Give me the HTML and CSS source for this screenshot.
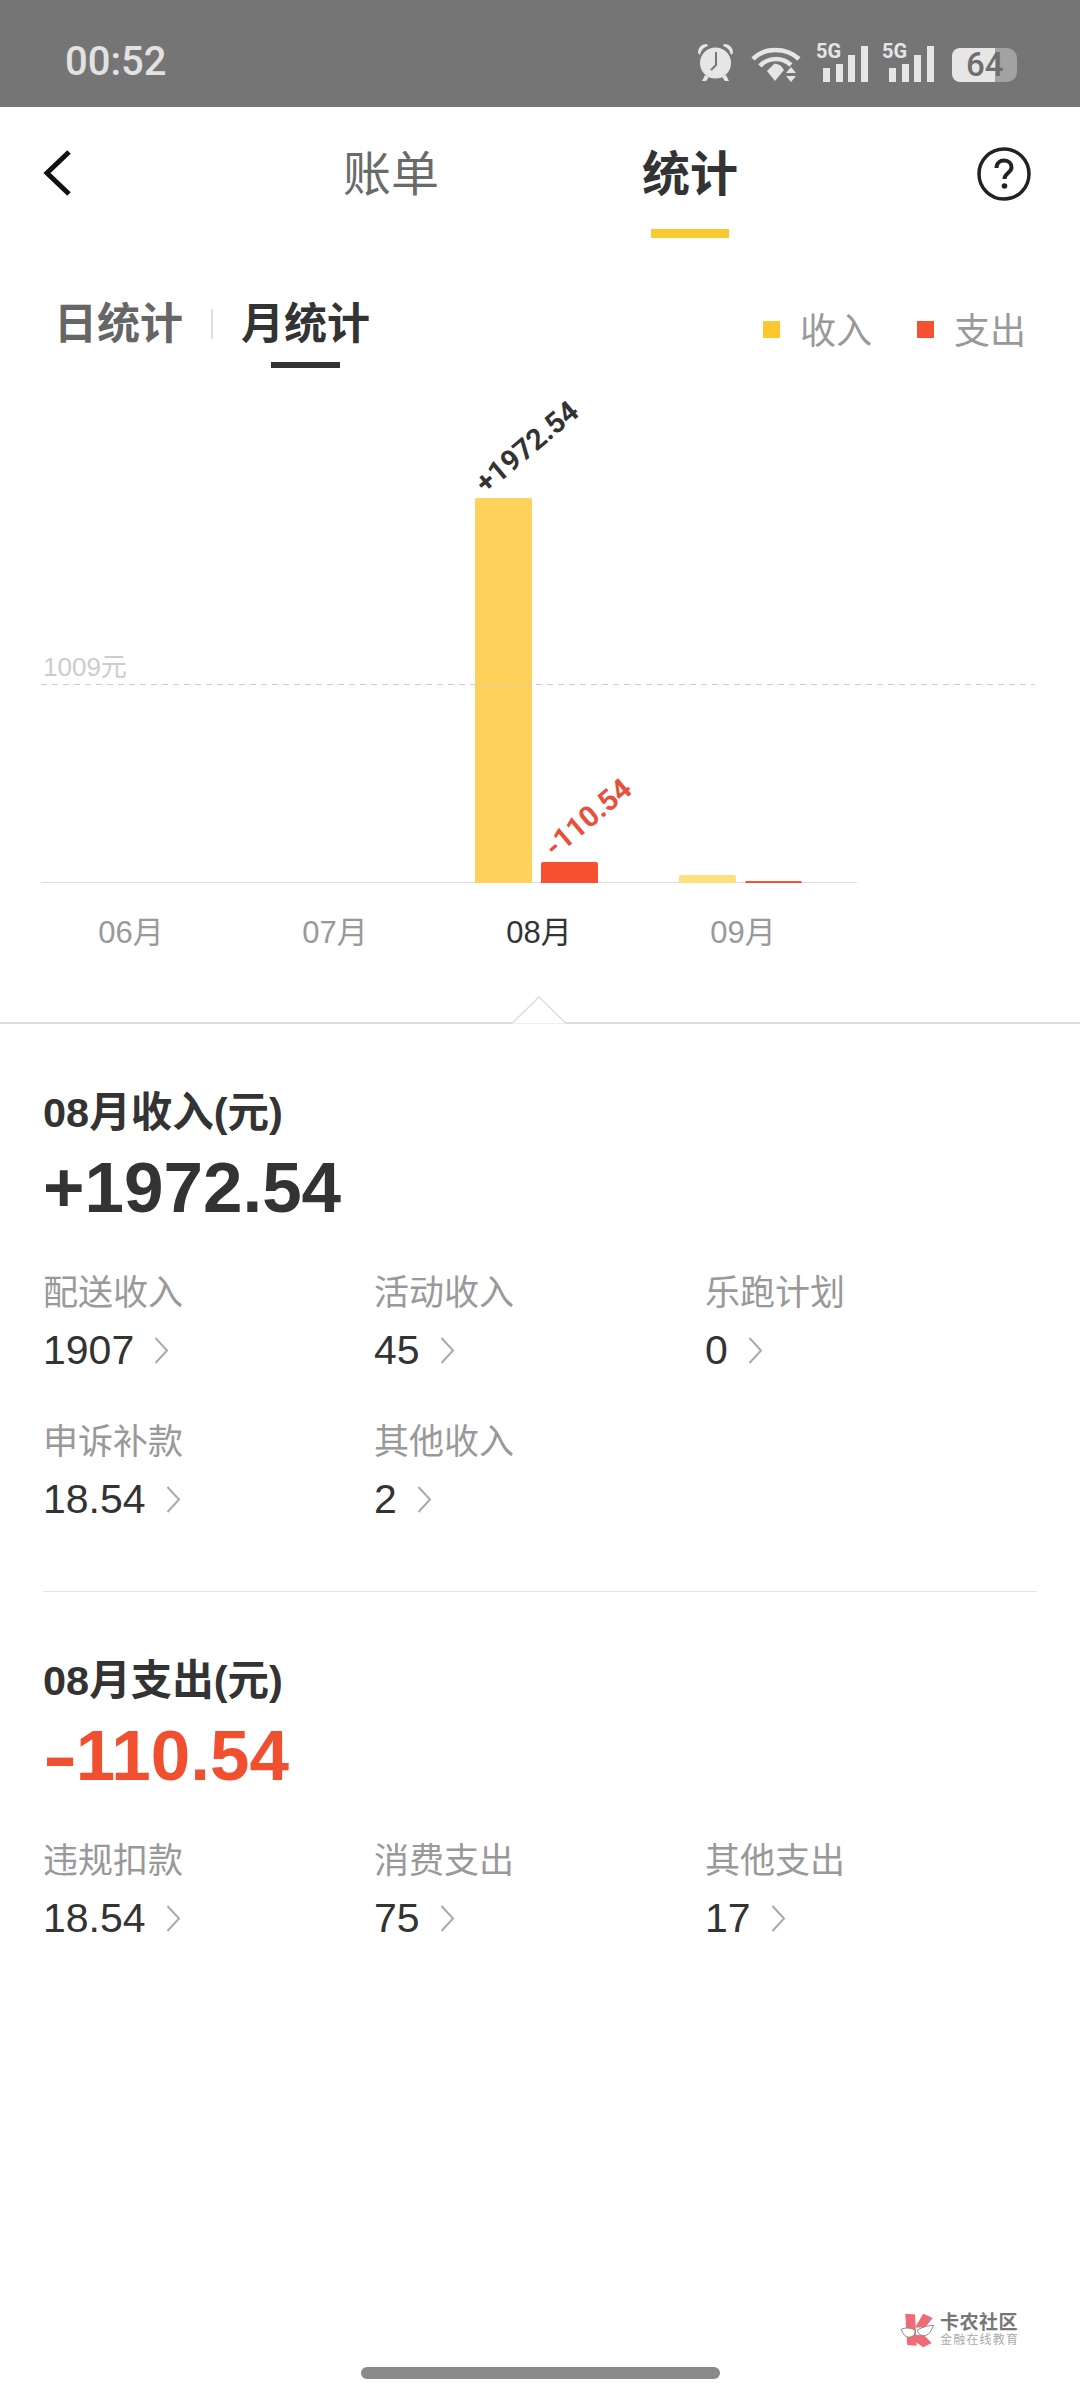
FILE: index.html
```html
<!DOCTYPE html>
<html lang="zh-CN">
<head>
  <meta charset="UTF-8">
  <meta name="viewport" content="width=device-width, initial-scale=1.0">
  <title>统计</title>
  <link rel="stylesheet" href="styles.css">
</head>
<body>
  <div id="page">
    <div class="status-bar">
      <span class="time">00:52</span>
      <div class="status-icons">
        <svg class="icon-alarm" width="37" height="39" viewBox="0 0 37 39">
          <path d="M1 10 C1 4 5 1 10 1 L11 3 C7 4 4 7 3 12 Z M36 10 C36 4 32 1 27 1 L26 3 C30 4 33 7 34 12 Z" fill="#e6e6e6"/>
          <path d="M8 32 L5 38 L9 38 L12 34 Z M29 32 L32 38 L28 38 L25 34 Z" fill="#e6e6e6"/>
          <circle cx="18.5" cy="20" r="15.5" fill="#e6e6e6"/>
          <path d="M19 9 L19 22 L14 27" fill="none" stroke="#757575" stroke-width="2"/>
        </svg>
        <svg class="icon-wifi" width="51" height="36" viewBox="0 0 51 36">
          <path d="M2 13 C13 1 35 1 48 13" fill="none" stroke="#e6e6e6" stroke-width="4.5"/>
          <path d="M9 20 C17 11 31 11 40 19" fill="none" stroke="#e6e6e6" stroke-width="4.5"/>
          <path d="M16 25 L23 18 C26 17 30 19 33 24 L24 35 Z" fill="#e6e6e6"/>
          <path d="M35 27 L45 27 L40 21 Z M35 30 L45 30 L40 36 Z" fill="#e6e6e6"/>
        </svg>
        <div class="signal">
          <span class="signal-label">5G</span>
          <i class="b1"></i><i class="b2"></i><i class="b3"></i><i class="b4"></i>
        </div>
        <div class="signal">
          <span class="signal-label">5G</span>
          <i class="b1"></i><i class="b2"></i><i class="b3"></i><i class="b4"></i>
        </div>
        <div class="battery"><span class="battery-num">64</span></div>
      </div>
    </div>

    <div class="nav">
      <svg class="back" width="29" height="46" viewBox="0 0 29 46">
        <path d="M26 2 L4 23 L26 44" fill="none" stroke="#111" stroke-width="5"/>
      </svg>
      <div class="tabs">
        <span class="tab">账单</span>
        <span class="tab active">统计</span>
      </div>
      <svg class="help" width="54" height="54" viewBox="0 0 54 54">
        <circle cx="27" cy="27" r="25" fill="none" stroke="#222" stroke-width="3.5"/>
        <path d="M19.5 21 C19.5 16 23 13.5 27 13.5 C31.5 13.5 34.5 16.5 34.5 20.5 C34.5 25.5 27.5 26 27.5 32" fill="none" stroke="#222" stroke-width="4"/>
        <circle cx="27.5" cy="39" r="2.8" fill="#222"/>
      </svg>
    </div>

    <div class="filter">
      <div class="range">
        <span class="range-item">日统计</span>
        <span class="range-sep"></span>
        <span class="range-item active">月统计</span>
      </div>
      <div class="legend">
        <i class="dot dot-in"></i><span class="legend-text">收入</span>
        <i class="dot dot-out"></i><span class="legend-text">支出</span>
      </div>
    </div>

    <div class="chart">
      <div class="avg-label">1009元</div>
      <div class="avg-line"></div>
      <div class="plot">
        <div class="col"></div>
        <div class="col"></div>
        <div class="col">
          <div class="bar bar-in" style="height: 385px">
            <span class="bar-num">+1972.54</span>
          </div>
          <div class="bar bar-out" style="height: 21px">
            <span class="bar-num bar-num-out">-110.54</span>
          </div>
        </div>
        <div class="col">
          <div class="bar bar-in-light" style="height: 8px"></div>
          <div class="bar bar-out" style="height: 2px"></div>
        </div>
      </div>
      <div class="months">
        <span class="month">06月</span>
        <span class="month">07月</span>
        <span class="month active">08月</span>
        <span class="month">09月</span>
      </div>
    </div>

    <div class="pointer-line">
      <svg class="pointer" width="54" height="28" viewBox="0 0 54 28">
        <path d="M0 27.5 L27 1 L54 27.5" fill="#fff" stroke="#ddd" stroke-width="1.5"/>
      </svg>
    </div>

    <div class="stat stat-income">
      <div class="stat-title">08月收入(元)</div>
      <div class="stat-value">+1972.54</div>
      <div class="items">
        <div class="item">
          <div class="item-label">配送收入</div>
          <div class="item-value">1907 <svg class="arrow" width="15" height="27" viewBox="0 0 15 27"><path d="M1.5 1 L13 13.5 L1.5 26" fill="none" stroke="#aaa" stroke-width="2"/></svg></div>
        </div>
        <div class="item">
          <div class="item-label">活动收入</div>
          <div class="item-value">45 <svg class="arrow" width="15" height="27" viewBox="0 0 15 27"><path d="M1.5 1 L13 13.5 L1.5 26" fill="none" stroke="#aaa" stroke-width="2"/></svg></div>
        </div>
        <div class="item">
          <div class="item-label">乐跑计划</div>
          <div class="item-value">0 <svg class="arrow" width="15" height="27" viewBox="0 0 15 27"><path d="M1.5 1 L13 13.5 L1.5 26" fill="none" stroke="#aaa" stroke-width="2"/></svg></div>
        </div>
        <div class="item">
          <div class="item-label">申诉补款</div>
          <div class="item-value">18.54 <svg class="arrow" width="15" height="27" viewBox="0 0 15 27"><path d="M1.5 1 L13 13.5 L1.5 26" fill="none" stroke="#aaa" stroke-width="2"/></svg></div>
        </div>
        <div class="item">
          <div class="item-label">其他收入</div>
          <div class="item-value">2 <svg class="arrow" width="15" height="27" viewBox="0 0 15 27"><path d="M1.5 1 L13 13.5 L1.5 26" fill="none" stroke="#aaa" stroke-width="2"/></svg></div>
        </div>
      </div>
    </div>

    <div class="stat stat-expense">
      <div class="stat-title">08月支出(元)</div>
      <div class="stat-value expense"><span class="minus">-</span>110.54</div>
      <div class="items">
        <div class="item">
          <div class="item-label">违规扣款</div>
          <div class="item-value">18.54 <svg class="arrow" width="15" height="27" viewBox="0 0 15 27"><path d="M1.5 1 L13 13.5 L1.5 26" fill="none" stroke="#aaa" stroke-width="2"/></svg></div>
        </div>
        <div class="item">
          <div class="item-label">消费支出</div>
          <div class="item-value">75 <svg class="arrow" width="15" height="27" viewBox="0 0 15 27"><path d="M1.5 1 L13 13.5 L1.5 26" fill="none" stroke="#aaa" stroke-width="2"/></svg></div>
        </div>
        <div class="item">
          <div class="item-label">其他支出</div>
          <div class="item-value">17 <svg class="arrow" width="15" height="27" viewBox="0 0 15 27"><path d="M1.5 1 L13 13.5 L1.5 26" fill="none" stroke="#aaa" stroke-width="2"/></svg></div>
        </div>
      </div>
    </div>

    <div class="watermark">
      <svg width="35" height="36" viewBox="120 95 105 110">
        <path d="M135 100 L165 103 L170 198 L141 196 Z" fill="#ee6b78"/>
        <path d="M190 100 L219 113 L196 142 L165 142 Z" fill="#ee6b78"/>
        <path d="M168 165 L192 165 L216 190 L190 203 L166 186 Z" fill="#ee6b78"/>
        <path d="M122 148 C135 142 150 143 165 150 C168 168 150 176 138 170 C130 166 128 158 122 148 Z" fill="#fff" stroke="#888" stroke-width="3"/>
        <path d="M222 136 C205 136 190 140 172 150 C175 168 195 172 206 162 C214 155 216 146 222 136 Z" fill="#fff" stroke="#888" stroke-width="3"/>
      </svg>
      <div class="watermark-text">
        <div class="watermark-name">卡农社区</div>
        <div class="watermark-sub">金融在线教育</div>
      </div>
    </div>

    <div class="home-bar"></div>
  </div>
</body>
</html>
```

FILE: styles.css
```css
* {
  box-sizing: border-box;
}

body {
  margin: 0;
  background-color: #ffffff;
  font-family: "Liberation Sans", "Noto Sans CJK SC", sans-serif;
  color: #333333;
}

#page {
  position: relative;
  width: 1080px;
  height: 2400px;
  overflow: hidden;
  background-color: #ffffff;
}

/* status bar */
.status-bar {
  display: flex;
  align-items: center;
  justify-content: space-between;
  height: 107px;
  padding: 16px 63px 0 65px;
  background-color: #757575;
}

.time {
  font-family: Roboto, sans-serif;
  font-size: 40px;
  font-weight: 500;
  color: #e2e2e2;
}

.status-icons {
  display: flex;
  align-items: flex-end;
  height: 40px;
}

.icon-alarm {
  margin-right: 17px;
}

.icon-wifi {
  margin-right: 14px;
}

.signal {
  position: relative;
  display: flex;
  align-items: flex-end;
  justify-content: flex-end;
  gap: 5.6px;
  width: 52px;
  height: 37px;
  margin-right: 14px;
}

.signal i {
  display: block;
  width: 7px;
  background-color: #e6e6e6;
}

.signal .b1 { height: 14px; }
.signal .b2 { height: 18px; }
.signal .b3 { height: 27px; }
.signal .b4 { height: 36px; }

.signal-label {
  position: absolute;
  top: -4px;
  left: 0;
  font-family: Roboto, sans-serif;
  font-size: 20px;
  font-weight: 700;
  line-height: 20px;
  color: #e6e6e6;
}

.battery {
  display: flex;
  align-items: center;
  width: 65px;
  height: 34px;
  margin-left: 4px;
  padding-left: 14px;
  border-radius: 8px 10px 10px 8px;
  background: linear-gradient(90deg, #e6e6e6 66%, #a2a2a2 66%);
}

.battery-num {
  font-family: Roboto, sans-serif;
  font-size: 33px;
  font-weight: 500;
  color: #6e6e6e;
}

/* title row */
.nav {
  position: relative;
  display: flex;
  align-items: center;
  justify-content: space-between;
  height: 133px;
  padding: 0 49px 0 43px;
}

.back {
  margin-top: -2px;
}

.tabs {
  display: flex;
  gap: 203px;
  margin-left: 32px;
  padding-top: 2px;
}

.tab {
  position: relative;
  font-size: 48px;
  line-height: 60px;
  color: #6a6a6a;
}

.tab.active {
  font-weight: 700;
  color: #333333;
}

.tab.active::after {
  content: "";
  position: absolute;
  left: 9px;
  bottom: -33px;
  width: 78px;
  height: 9px;
  background-color: #fbc92f;
}

/* day / month filter */
.filter {
  display: flex;
  align-items: flex-start;
  justify-content: space-between;
  height: 140px;
  padding: 56px 54px 0 54px;
}

.range {
  display: flex;
  align-items: center;
}

.range-item {
  position: relative;
  font-size: 43px;
  font-weight: 700;
  line-height: 56px;
  color: #666666;
}

.range-item.active {
  color: #333333;
}

.range-item.active::after {
  content: "";
  position: absolute;
  left: 30px;
  bottom: -16px;
  width: 69px;
  height: 6px;
  background-color: #333333;
}

.range-sep {
  width: 2px;
  height: 30px;
  margin: 0 28px;
  background-color: #dddddd;
}

.legend {
  display: flex;
  align-items: center;
  margin-top: 13px;
}

.dot {
  display: block;
  width: 17px;
  height: 17px;
  margin-right: 20px;
  margin-bottom: 6px;
}

.dot-in {
  background-color: #fbc92f;
}

.dot-out {
  background-color: #f5502f;
}

.legend-text {
  font-size: 36px;
  line-height: 46px;
  color: #999999;
}

.legend-text:nth-child(2) {
  margin-right: 45px;
}

/* chart */
.chart {
  position: relative;
  height: 642px;
  padding-left: 41px;
}

.avg-label {
  position: absolute;
  top: 272px;
  left: 43px;
  font-size: 26px;
  line-height: 30px;
  color: #cccccc;
}

.avg-line {
  position: absolute;
  top: 304px;
  left: 41px;
  width: 994px;
  height: 1px;
  background: repeating-linear-gradient(90deg, #cccccc 0 6px, transparent 6px 11px);
  z-index: 2;
}

.plot {
  display: grid;
  grid-template-columns: repeat(4, 204px);
  width: 816px;
  height: 503px;
  border-bottom: 1px solid #dddddd;
}

.col {
  display: flex;
  align-items: flex-end;
  gap: 9px;
  height: 502px;
  padding-left: 26px;
}

.bar {
  position: relative;
  flex: none;
  width: 57px;
  margin-bottom: -1px;
  border-radius: 2px 2px 0 0;
}

.bar-in {
  background-color: #fed25a;
}

.bar-in-light {
  background-color: #fde17f;
}

.bar-out {
  background-color: #f5502f;
}

.bar-num {
  position: absolute;
  left: 14px;
  bottom: 100%;
  font-family: Roboto, sans-serif;
  font-size: 29px;
  font-weight: 700;
  line-height: 30px;
  white-space: nowrap;
  color: #333333;
  transform: rotate(-40deg);
  transform-origin: left bottom;
}

.bar-num-out {
  left: 17px;
  color: #e8503a;
}

.months {
  display: grid;
  grid-template-columns: repeat(4, 204px);
  padding-top: 30px;
}

.month {
  padding-right: 24px;
  font-size: 31px;
  line-height: 40px;
  text-align: center;
  color: #999999;
}

.month.active {
  color: #333333;
}

.pointer-line {
  position: relative;
  height: 2px;
  background-color: #dddddd;
}

.pointer {
  position: absolute;
  left: 512px;
  bottom: 0;
}

/* totals */
.stat {
  padding: 67px 43px 0;
}

.stat-income {
  position: relative;
  height: 568px;
}

.stat-income::after {
  content: "";
  position: absolute;
  left: 43px;
  bottom: 0;
  width: 994px;
  height: 1px;
  background-color: #e3e3e3;
}

.stat-title {
  font-size: 41.5px;
  font-weight: 700;
  line-height: 44px;
}

.stat-value {
  margin-top: 13px;
  font-size: 71px;
  font-weight: 700;
  line-height: 80px;
}

.stat-value.expense {
  color: #f0502f;
}

.minus {
  display: inline-block;
  margin-right: 9px;
  transform: scaleX(1.45);
  transform-origin: left center;
}

.items {
  display: grid;
  grid-template-columns: 331px 331px 330px;
  row-gap: 46px;
  margin-top: 42px;
}

.item-label {
  font-size: 35px;
  line-height: 46px;
  color: #999999;
}

.item-value {
  display: flex;
  align-items: center;
  gap: 20px;
  height: 46px;
  margin-top: 11px;
  font-size: 41px;
}

/* overlays */
.watermark {
  position: absolute;
  left: 900px;
  top: 2312px;
  display: flex;
  gap: 5px;
}

.watermark-name {
  font-size: 19px;
  font-weight: 700;
  line-height: 21px;
  letter-spacing: 0.5px;
  color: #777777;
}

.watermark-sub {
  font-size: 12px;
  line-height: 15px;
  letter-spacing: 1.2px;
  color: #aaaaaa;
}

.home-bar {
  position: absolute;
  left: 361px;
  top: 2367px;
  width: 359px;
  height: 12px;
  border-radius: 6px;
  background-color: #8a8a8a;
}
```
